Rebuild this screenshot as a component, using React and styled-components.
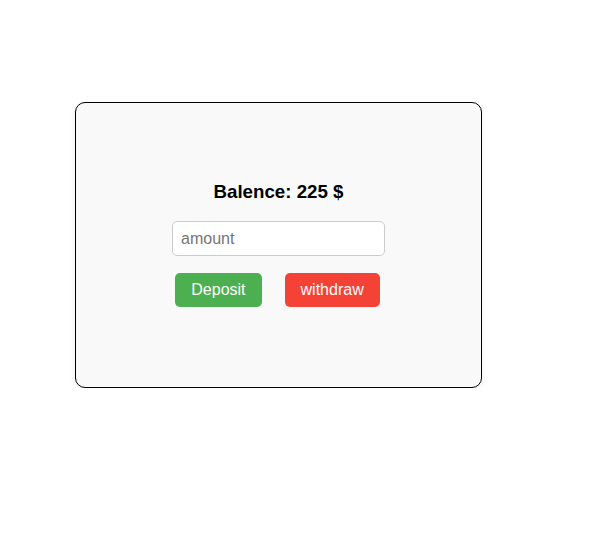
import React, { useState } from "react";
import styled, { createGlobalStyle } from "styled-components";

const GlobalStyle = createGlobalStyle`
    body {
        margin: 0;
        background: #ffffff;
        font-family: "Liberation Sans", Arial, sans-serif;
    }
`;

const Page = styled.div`
    padding: 102px 0 0 75px;
`;

const Card = styled.div`
    width: 405px;
    height: 284px;
    background: #f9f9f9;
    border: 1px solid #000;
    border-radius: 10px;
    box-shadow: 0 2px 6px rgba(0, 0, 0, 0.08);
    display: flex;
    flex-direction: column;
    align-items: center;
    justify-content: center;
`;

const Title = styled.h3`
    margin: 0 0 18px;
    font-size: 18.72px;
    font-weight: bold;
    color: #000;
`;

const Input = styled.input`
    width: 213px;
    height: 35px;
    box-sizing: border-box;
    padding: 8px;
    font-size: 16px;
    font-family: "Liberation Sans", Arial, sans-serif;
    border: 1px solid #ccc;
    border-radius: 5px;
    background: #fff;
    outline: none;
    &::placeholder {
        color: #757575;
    }
`;

const Buttons = styled.div`
    display: flex;
    gap: 23px;
    margin: 17px 2px 2px 0;
`;

const Button = styled.button`
    height: 34px;
    padding: 0 16px;
    border: none;
    border-radius: 5px;
    font-size: 16px;
    font-family: "Liberation Sans", Arial, sans-serif;
    color: #fff;
    background: ${(p) => (p.$danger ? "#f44336" : "#4caf50")};
    cursor: pointer;
`;

export default function App() {
    const [balance, setBalance] = useState(225);
    const [amount, setAmount] = useState("");
    const value = Number(amount) || 0;
    return (
        <Page>
            <GlobalStyle />
            <Card>
                <Title>Balence: {balance} $</Title>
                <Input
                    placeholder="amount"
                    value={amount}
                    onChange={(e) => setAmount(e.target.value)}
                />
                <Buttons>
                    <Button onClick={() => setBalance(balance + value)}>Deposit</Button>
                    <Button $danger onClick={() => setBalance(balance - value)}>
                        withdraw
                    </Button>
                </Buttons>
            </Card>
        </Page>
    );
}
